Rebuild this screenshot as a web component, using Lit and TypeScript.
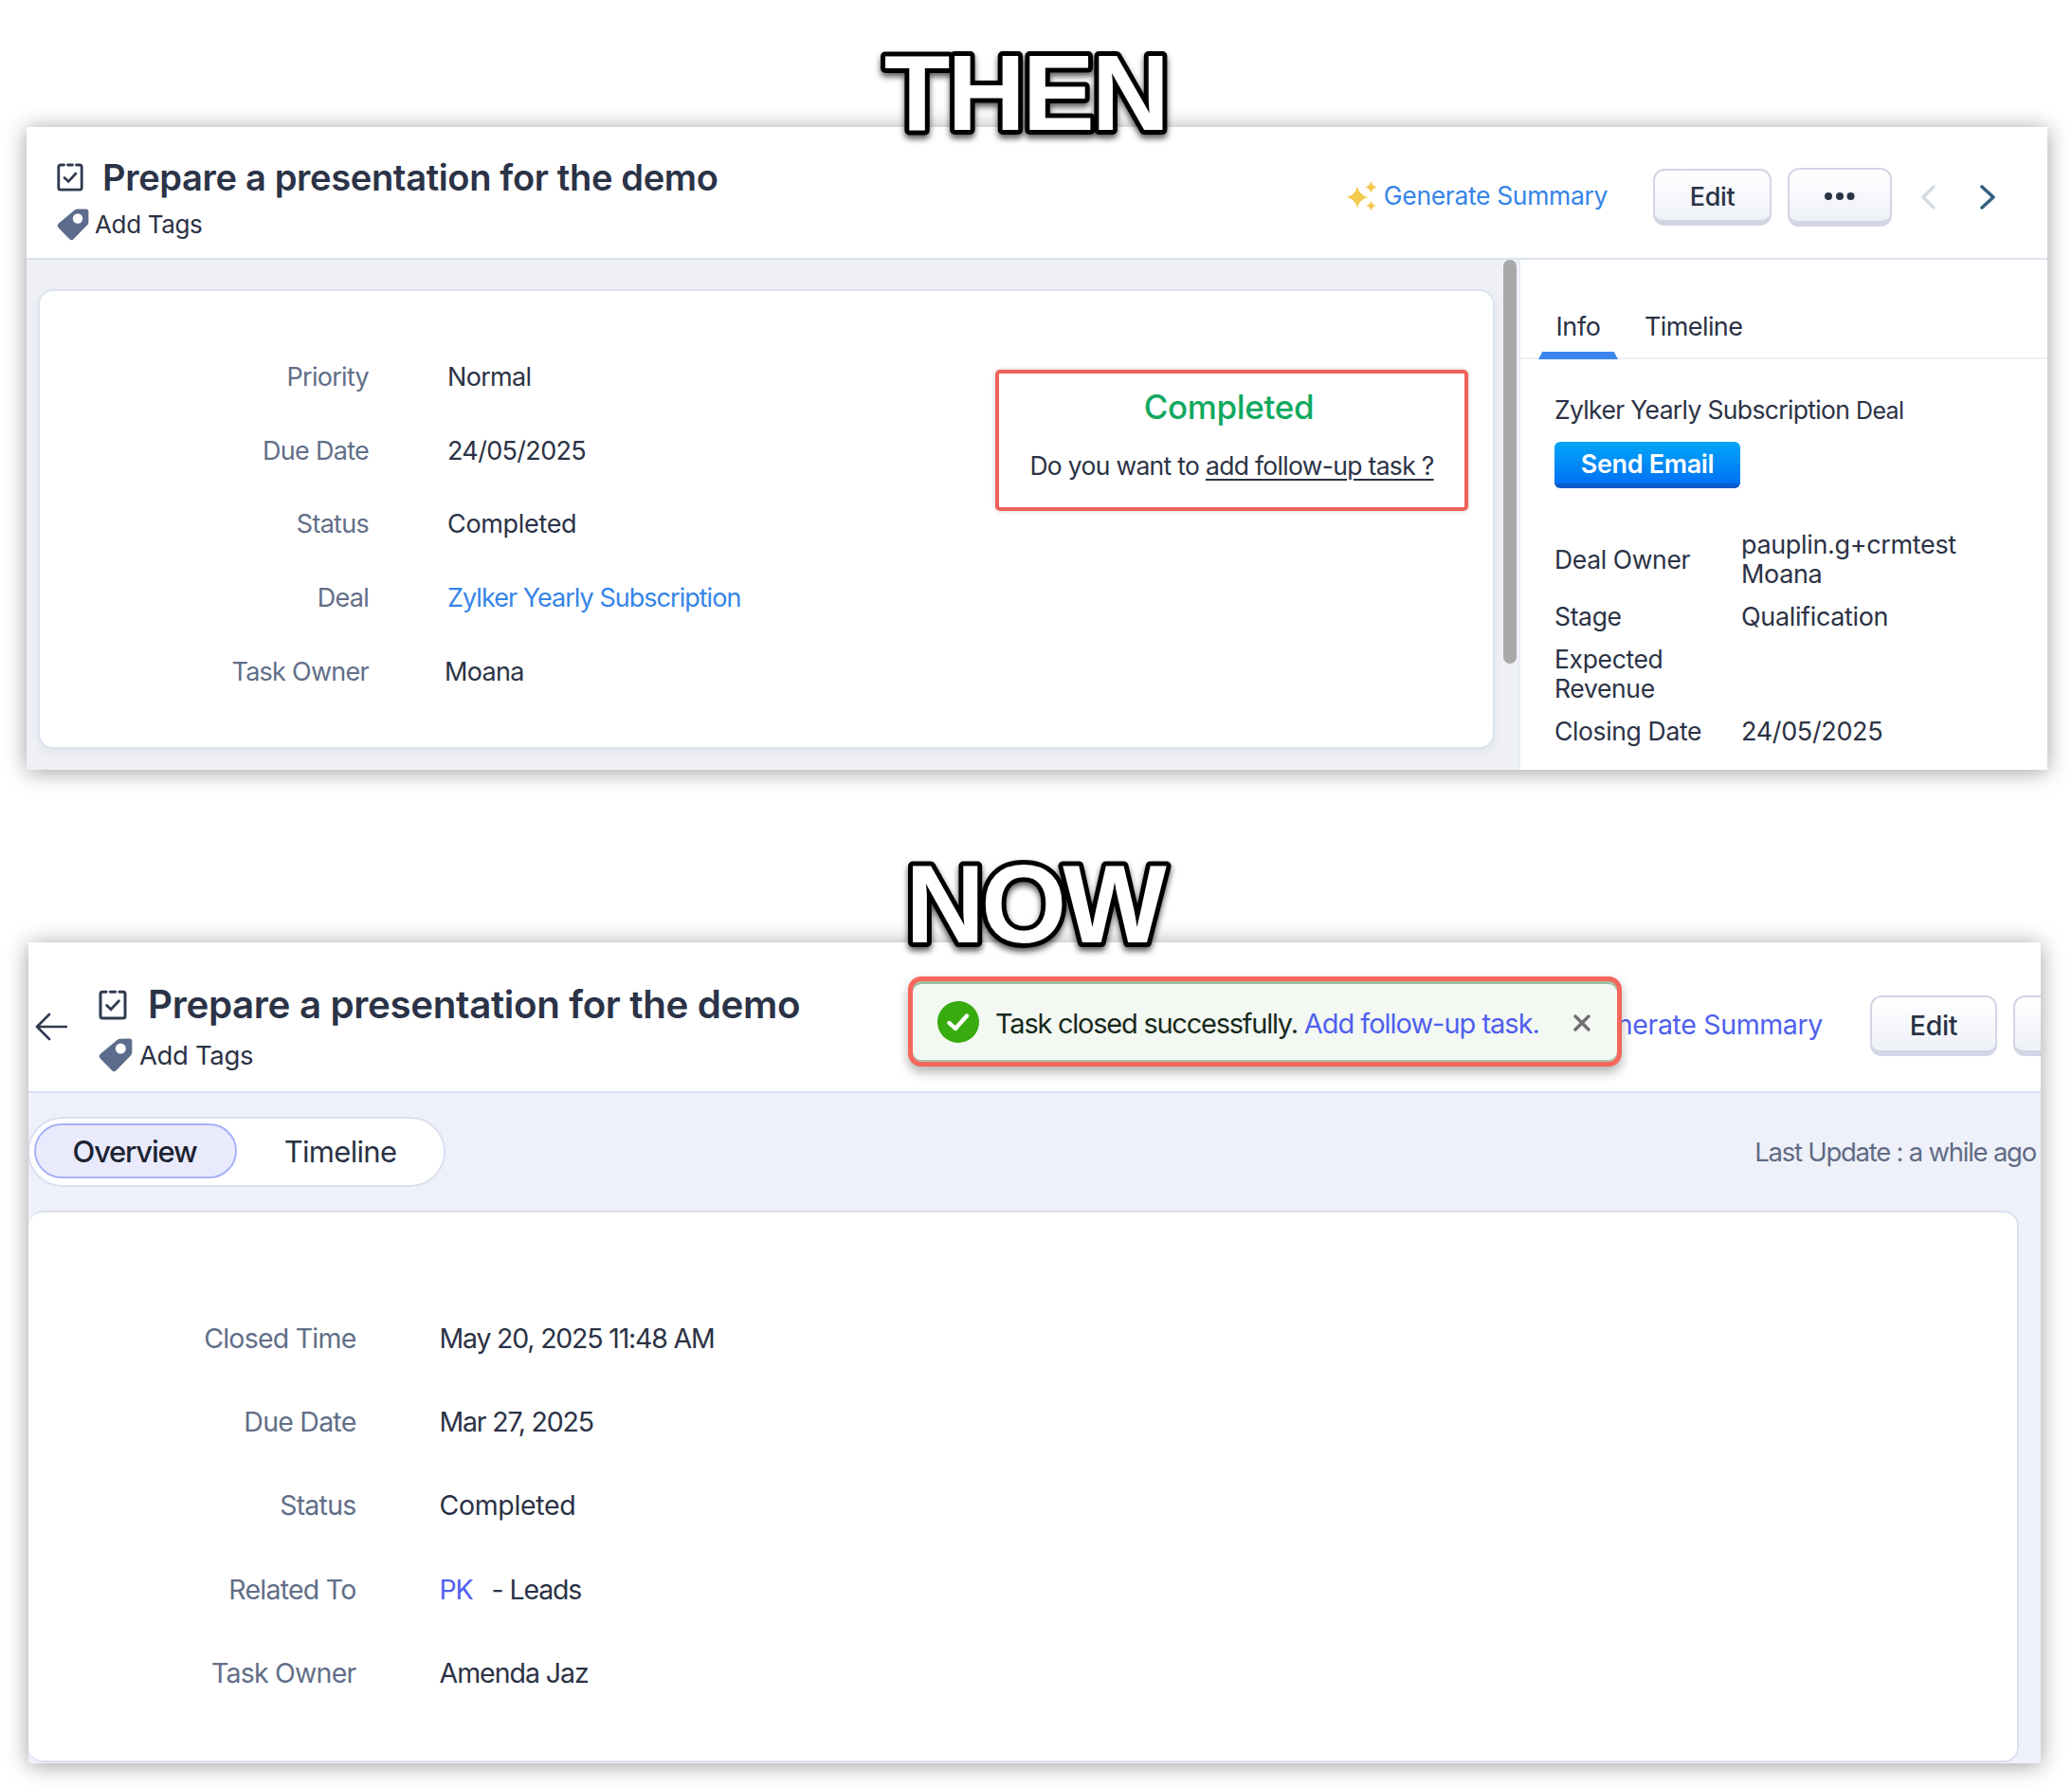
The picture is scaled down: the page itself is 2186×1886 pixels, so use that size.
import { LitElement, html, css } from "lit";
import { customElement } from "lit/decorators.js";

const sparkle = (x: number, y: number, r: number) => {
  const c = r * 0.18;
  return `M${x} ${y - r}Q${x + c} ${y - c} ${x + r} ${y}Q${x + c} ${y + c} ${x} ${y + r}Q${x - c} ${y + c} ${x - r} ${y}Q${x - c} ${y - c} ${x} ${y - r}Z`;
};

const taskIcon = (w: number, h: number) => html`<svg class="ti" width=${w} height=${h} viewBox="0 0 28 30" fill="none" stroke="#2f3a4f" stroke-width="2.8" stroke-linecap="round">
  <path d="M7.5 2H4Q1.8 2 1.8 4V26Q1.8 28.2 4 28.2H24Q26.2 28.2 26.2 26V4Q26.2 2 24 2H20.5M11.5 2H16.5" />
  <path d="M8 15.5L12.2 19.5L20 11" stroke-width="2.6" />
</svg>`;

const tagIcon = (w: number, h: number) => html`<svg width=${w} height=${h} viewBox="0 0 34 34">
  <path fill="#5d6c8c" d="M2 15.5L18.5 1.8Q20 .6 22 .6L30.5 .4Q33.4 .4 33.4 3.2V14.5Q33.4 16 32 17.5L17.5 32.3Q15.3 34.2 13.4 32.3L1.6 20.2Q-.4 17.6 2 15.5Z" />
  <circle cx="22" cy="10.5" r="5.2" fill="#fff" />
</svg>`;

const stars = html`<svg width="34" height="34" viewBox="0 0 34 34" fill="#f6c94f">
  <path d=${sparkle(14, 19, 11.5)} /><path d=${sparkle(28.5, 8.5, 6.5)} /><path d=${sparkle(28.5, 28, 5.5)} />
</svg>`;

const dots = html`<svg width="34" height="10" viewBox="0 0 34 10" fill="#2b3347"><circle cx="5" cy="5" r="4" /><circle cx="17" cy="5" r="4" /><circle cx="28.5" cy="5" r="4" /></svg>`;

@customElement("app-root")
export class AppRoot extends LitElement {
  static styles = css`
    :host { display: block; min-height: 1886px; background: #fff; font-family: Inter, "Liberation Sans", sans-serif; color: #2b3245; letter-spacing: -0.022em; }
    * { box-sizing: border-box; }
    svg { display: block; flex: none; }

    .heading { position: relative; z-index: 2; }
    .h-then { height: 134px; }
    .h-now { height: 182px; }
    .heading svg { overflow: visible; filter: drop-shadow(0 4px 3px rgba(0,0,0,.65)); }
    .heading text { font-family: "Liberation Sans", Arial, sans-serif; font-weight: 700; fill: #fff; stroke: #000; stroke-width: 10px; stroke-linejoin: round; paint-order: stroke fill; }
    .h-then text { font-size: 114px; letter-spacing: -3px; }
    .h-now text { font-size: 116px; letter-spacing: -4px; }

    .panel { background: #fff; box-shadow: 0 2px 22px rgba(0,0,0,.38); overflow: hidden; position: relative; }
    .then { margin-left: 28px; width: 2132px; height: 678px; display: flex; flex-direction: column; }
    .now { margin-left: 30px; width: 2123px; height: 866px; background: #eef1f9; display: flex; flex-direction: column; }

    .head { display: flex; align-items: center; background: #fff; flex: none; position: relative; }
    .then .head { height: 140px; padding: 0 55px 0 32px; border-bottom: 2px solid #dbe3ee; }
    .now .head { height: 159px; padding: 0 0 0 7px; border-bottom: 2px solid #dcdff0; }

    .titles { display: flex; flex-direction: column; }
    .then .titles { margin-top: 22px; }
    .now .titles { margin-top: 37px; }
    .title-row, .tags { display: flex; align-items: center; }
    .title { font-weight: 600; white-space: nowrap; color: #2b3347; }
    .then .title { font-size: 38.1px; line-height: 50px; margin-left: 20px; }
    .then .title-row { margin-top: -13px; }
    .then .tags { margin-top: 8px; font-size: 26px; gap: 6px; line-height: 34px; }
    .now .back { margin-right: 33px; margin-top: 20px; }
    .now .title { font-size: 40.3px; line-height: 52px; margin-left: 22px; }
    .now .title-row { margin-top: -17px; }
    .now .tags { margin-top: 9px; font-size: 27.5px; gap: 7px; line-height: 36px; }

    .actions { display: flex; align-items: center; margin-left: auto; flex: none; }
    .then .actions { margin-top: 10px; }
    .gen { display: flex; align-items: center; white-space: nowrap; }
    .then .gen { font-size: 26.5px; color: #3584e8; gap: 8px; margin-right: 48px; margin-top: -4px; }
    .now .actions { margin-right: -81px; margin-top: 19px; }
    .now .gen { font-size: 28.5px; color: #4f60ee; gap: 10px; margin-right: 50px; margin-top: -3px; }

    .btn { display: flex; align-items: center; justify-content: center; flex: none; background: linear-gradient(#fff, #eef1f8); border: 2px solid #d2d6e4; border-bottom-width: 6px; border-radius: 12px; font-weight: 500; color: #2b3347; padding-top: 2px; }
    .then .edit { width: 125px; height: 60px; font-size: 27px; }
    .then .more { width: 110px; height: 62px; margin-left: 17px; }
    .now .edit { width: 134px; height: 64px; font-size: 28.5px; }
    .now .more { width: 110px; height: 64px; margin-left: 17px; }
    .chev-l { margin-left: 30px; }
    .chev-r { margin-left: 47px; }

    .body { display: flex; flex: 1; min-height: 0; }
    .left { width: 1574px; background: #eef0f5; display: flex; padding-left: 12px; flex: none; }
    .card { background: #fff; border: 2px solid #dbe3ee; border-radius: 16px; }
    .then .card { width: 1537px; margin: 31px 0 22px; display: flex; justify-content: space-between; box-shadow: 0 4px 10px rgba(100,110,130,.08); }
    .scroll { width: 14px; height: 426px; margin-left: 9px; background: #a9a9a9; border-radius: 7px; }

    .fields { display: grid; align-content: start; white-space: nowrap; letter-spacing: -0.027em; }
    .then .fields { grid-template-columns: 347px auto; column-gap: 83px; grid-auto-rows: 77.6px; padding-top: 52px; font-size: 27px; }
    .now .fields { grid-template-columns: 345.5px auto; column-gap: 88px; grid-auto-rows: 88.3px; padding-top: 88px; font-size: 28.5px; }
    .fields > div { display: flex; align-items: center; }
    .lbl { justify-content: flex-end; color: #616e88; }
    .owner { margin-left: -3px; }
    .val { letter-spacing: -0.025em; }
    .long { letter-spacing: -0.036em; }
    .date { letter-spacing: -0.042em; }
    .stat { letter-spacing: -0.012em; }
    .then .link { color: #3584e8; }
    .now .link { color: #4f60ee; margin-right: 20px; }
    .leads { letter-spacing: -0.04em; }

    .done { width: 499px; height: 149px; margin: 83px 26px 0 0; border: 4px solid #ee6258; border-radius: 5px; box-shadow: 0 0 5px rgba(0,0,0,.2); display: flex; flex-direction: column; align-items: center; }
    .done b { font-weight: 500; font-size: 35px; line-height: 44px; color: #10a95f; margin-top: 13px; margin-left: -6px; }
    .done p { margin: 23px 0 0; font-size: 26.5px; line-height: 34px; white-space: nowrap; letter-spacing: -0.026em; }
    .done u { text-underline-offset: 4px; }

    .side { width: 558px; flex: none; border-left: 2px solid #e9edf3; background: #fff; }
    .tabs { display: flex; align-items: flex-end; height: 105px; padding-left: 19px; border-bottom: 2px solid #edf0f5; font-size: 27px; }
    .tabs div { line-height: 34px; padding-bottom: 15px; }
    .tabs .on { width: 84px; text-align: center; position: relative; margin-bottom: -2px; padding-bottom: 17px; }
    .tabs .on::after { content: ""; position: absolute; left: 0; right: 0; bottom: 0; height: 8px; background: #3b87ee; clip-path: polygon(5% 0, 95% 0, 100% 100%, 0 100%); }
    .tabs .off { margin-left: 28px; letter-spacing: -0.022em; }
    .sbody { padding: 36px 0 0 36px; font-size: 26.5px; line-height: 31px; }
    .deal { line-height: 34px; white-space: nowrap; letter-spacing: -0.025em; }
    .deal span { font-size: 25px; }
    .send { display: flex; align-items: center; justify-content: center; width: 196px; height: 49px; margin-top: 16px; padding-top: 2px; border-radius: 6px; color: #fff; font-weight: 600; font-size: 27px; background: linear-gradient(#03a6f7, #0072f6); border-bottom: 5px solid #0a5cc9; }
    .info { display: grid; grid-template-columns: 197px auto; row-gap: 14px; align-items: center; margin-top: 44px; }
    .info .v { font-size: 27px; }

    .toast { position: absolute; left: 928px; top: 36px; width: 753px; height: 95px; border: 5px solid #f6665a; border-radius: 14px; background: #f3f8f3; box-shadow: 0 6px 12px rgba(0,0,0,.3), inset 0 3px 0 #9dc09f, inset 0 -2px 0 #a9c3ab; display: flex; align-items: center; padding-left: 26px; font-size: 29px; color: #17291a; white-space: nowrap; z-index: 1; }
    .toast .msg { margin-left: 17px; margin-top: 3px; letter-spacing: -0.043em; }
    .toast .link { color: #4f60ee; letter-spacing: -0.035em; margin: 0; }
    .toast .x { position: absolute; left: 697px; top: 35px; }

    .bar { flex: none; height: 124px; display: flex; align-items: flex-start; justify-content: space-between; padding: 25px 5px 0 0; }
    .seg { width: 441px; height: 74px; padding: 6px; border: 2px solid #dcdff0; border-radius: 37px; background: #fff; display: flex; align-items: center; font-size: 31px; margin-left: -1px; }
    .seg .on { width: 214px; height: 58px; border: 2px solid #a6b3f8; border-radius: 29px; background: #e9ebfd; display: flex; align-items: center; justify-content: center; font-weight: 500; color: #1d2332; margin-top: -2px; letter-spacing: -0.04em; margin-left: -1px; padding-right: 2px; }
    .seg .off { flex: 1; text-align: center; margin-top: -2px; letter-spacing: -0.022em; padding-left: 6px; }
    .updated { font-size: 27.5px; color: #616b85; line-height: 74px; letter-spacing: -0.045em; }
    .now .card { width: 2100px; flex: 1; margin-bottom: 1px; border-width: 2px 2px 2px 0; border-color: #dcdff0; border-radius: 16px; }
  `;

  render() {
    return html`
      <div class="heading h-then"><svg width="2186" height="134"><text x="1082" y="136.5" text-anchor="middle">THEN</text></svg></div>
      <section class="panel then">
        <header class="head">
          <div class="titles">
            <div class="title-row">${taskIcon(28, 30)}<div class="title">Prepare a presentation for the demo</div></div>
            <div class="tags">${tagIcon(34, 34)}<span>Add Tags</span></div>
          </div>
          <div class="actions">
            <div class="gen">${stars}<span>Generate Summary</span></div>
            <div class="btn edit">Edit</div>
            <div class="btn more">${dots}</div>
            <svg class="chev-l" width="16" height="26" viewBox="0 0 16 26" fill="none" stroke="#d5dbe3" stroke-width="3.4" stroke-linecap="round" stroke-linejoin="round"><path d="M14 2L3 13L14 24" /></svg>
            <svg class="chev-r" width="16" height="26" viewBox="0 0 16 26" fill="none" stroke="#35607f" stroke-width="3.6" stroke-linecap="round" stroke-linejoin="round"><path d="M2 2L14 13L2 24" /></svg>
          </div>
        </header>
        <div class="body">
          <div class="left">
            <div class="card">
              <div class="fields">
                <div class="lbl">Priority</div><div class="val">Normal</div>
                <div class="lbl">Due Date</div><div class="val">24/05/2025</div>
                <div class="lbl">Status</div><div class="stat">Completed</div>
                <div class="lbl">Deal</div><div class="link long">Zylker Yearly Subscription</div>
                <div class="lbl">Task Owner</div><div class="owner val">Moana</div>
              </div>
              <div class="done">
                <b>Completed</b>
                <p>Do you want to <u>add follow-up task ?</u></p>
              </div>
            </div>
            <div class="scroll"></div>
          </div>
          <aside class="side">
            <div class="tabs"><div class="on">Info</div><div class="off">Timeline</div></div>
            <div class="sbody">
              <div class="deal">Zylker Yearly Subscription <span>Deal</span></div>
              <div class="send">Send Email</div>
              <div class="info">
                <div>Deal Owner</div><div class="v">pauplin.g+crmtest<br />Moana</div>
                <div>Stage</div><div class="v">Qualification</div>
                <div>Expected<br />Revenue</div><div></div>
                <div>Closing Date</div><div class="v">24/05/2025</div>
              </div>
            </div>
          </aside>
        </div>
      </section>

      <div class="heading h-now"><svg width="2186" height="182"><text x="1091" y="182" text-anchor="middle">NOW</text></svg></div>
      <section class="panel now">
        <header class="head">
          <svg class="back" width="34" height="30" viewBox="0 0 34 30" fill="none" stroke="#2f3a4f" stroke-width="2.6" stroke-linecap="round" stroke-linejoin="round"><path d="M33 15H2M15 2L2 15L15 28" /></svg>
          <div class="titles">
            <div class="title-row">${taskIcon(30, 32)}<div class="title">Prepare a presentation for the demo</div></div>
            <div class="tags">${tagIcon(36, 36)}<span>Add Tags</span></div>
          </div>
          <div class="actions">
            <div class="gen">${stars}<span>Generate Summary</span></div>
            <div class="btn edit">Edit</div>
            <div class="btn more">${dots}</div>
          </div>
          <div class="toast">
            <svg width="44" height="44" viewBox="0 0 44 44"><circle cx="22" cy="22" r="22" fill="#38ab0e" /><path d="M12.5 23L19 29L31 15.5" fill="none" stroke="#fff" stroke-width="4.4" stroke-linecap="round" stroke-linejoin="round" /></svg>
            <span class="msg">Task closed successfully. <span class="link">Add follow-up task.</span></span>
            <svg class="x" width="18" height="18" viewBox="0 0 18 18" stroke="#6f6f6f" stroke-width="3.4" stroke-linecap="round"><path d="M2 2L16 16M16 2L2 16" /></svg>
          </div>
        </header>
        <div class="bar">
          <div class="seg"><div class="on">Overview</div><div class="off">Timeline</div></div>
          <div class="updated">Last Update : a while ago</div>
        </div>
        <div class="card">
          <div class="fields">
            <div class="lbl">Closed Time</div><div class="date">May 20, 2025 11:48 AM</div>
            <div class="lbl">Due Date</div><div class="date">Mar 27, 2025</div>
            <div class="lbl">Status</div><div class="stat">Completed</div>
            <div class="lbl">Related To</div><div class="leads"><span class="link">PK</span> - Leads</div>
            <div class="lbl">Task Owner</div><div class="long">Amenda Jaz</div>
          </div>
        </div>
      </section>
    `;
  }
}
